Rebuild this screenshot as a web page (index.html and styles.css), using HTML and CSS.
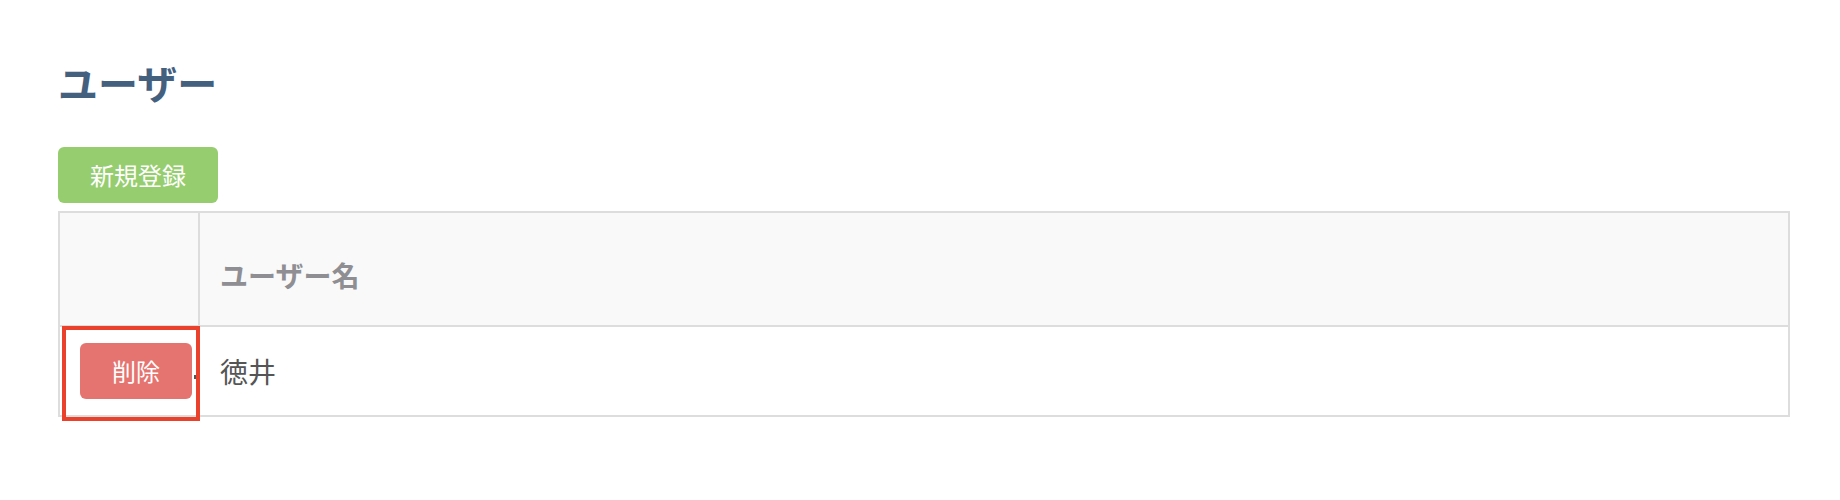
FILE: index.html
```html
<!DOCTYPE html>
<html lang="ja">
<head>
  <meta charset="UTF-8" />
  <meta name="viewport" content="width=device-width, initial-scale=1.0"/>
  <title>ユーザー</title>
  <link rel="stylesheet" href="styles.css">
</head>
<body>
  <div class="page">
    <!-- タイトル -->
    <h1 class="page-title">ユーザー</h1>
    <div class="toolbar">
      <button class="btn btn-new">新規登録</button>
    </div>
    <!-- 一覧 -->
    <div class="table-wrap">
      <table class="user-table">
        <colgroup>
          <col class="col-action">
          <col>
        </colgroup>
        <thead>
          <tr>
            <th class="cell-action"></th>
            <th>ユーザー名</th>
          </tr>
        </thead>
        <tbody>
          <tr>
            <td class="cell-action">
              <button class="btn btn-delete">削除</button>
            </td>
            <td class="cell-name">徳井</td>
          </tr>
        </tbody>
      </table>
      <span class="grip"></span>
      <span class="highlight"></span>
    </div>
  </div>
</body>
</html>
```

FILE: styles.css
```css
html, body {
  margin: 0;
  background: #fff;
}
body {
  min-height: 500px;
  font-family: "Noto Sans CJK JP", "Noto Sans", sans-serif;
}
.page {
  padding: 58px 50px 80px 58px;
}
/* タイトル */
.page-title {
  margin: 0;
  font-size: 40px;
  line-height: 48px;
  font-weight: bold;
  color: #44607f;
}
.toolbar {
  margin-top: 41px;
}
/* ボタン */
.btn {
  display: inline-block;
  border: none;
  border-radius: 6px;
  color: #fff;
  font-family: inherit;
  font-size: 24px;
  line-height: 32px;
  padding: 12px 32px;
  cursor: pointer;
}
.btn-new { background: #96cd6f; }
.btn-delete {
  display: block;
  background: #e57470;
}
/* テーブル */
.table-wrap {
  position: relative;
  margin-top: 8px;
}
.user-table {
  width: 100%;
  table-layout: fixed;
  border: 2px solid #ddd;
  border-spacing: 0;
}
.user-table .col-action { width: 140px; }
.user-table th {
  background: #f9f9f9;
  color: #8e8e93;
  font-size: 28px;
  font-weight: bold;
  line-height: 40px;
  text-align: left;
  vertical-align: bottom;
  padding: 42px 20px 30px;
  border-bottom: 2px solid #ddd;
}
.user-table td {
  font-size: 28px;
  line-height: 40px;
  color: #555;
  vertical-align: middle;
}
.user-table .cell-action {
  border-right: 2px solid #ddd;
}
.user-table td.cell-action {
  padding: 16px 6px 16px 20px;
}
.user-table .cell-name {
  padding: 0 20px;
}
.grip {
  position: absolute;
  left: 136px;
  top: 164px;
  width: 2px;
  height: 4px;
  background: #555;
}
/* 注目枠 */
.highlight {
  position: absolute;
  left: 4px;
  top: 115px;
  width: 138px;
  height: 95px;
  box-sizing: border-box;
  border: 4px solid #e9412b;
}
```
